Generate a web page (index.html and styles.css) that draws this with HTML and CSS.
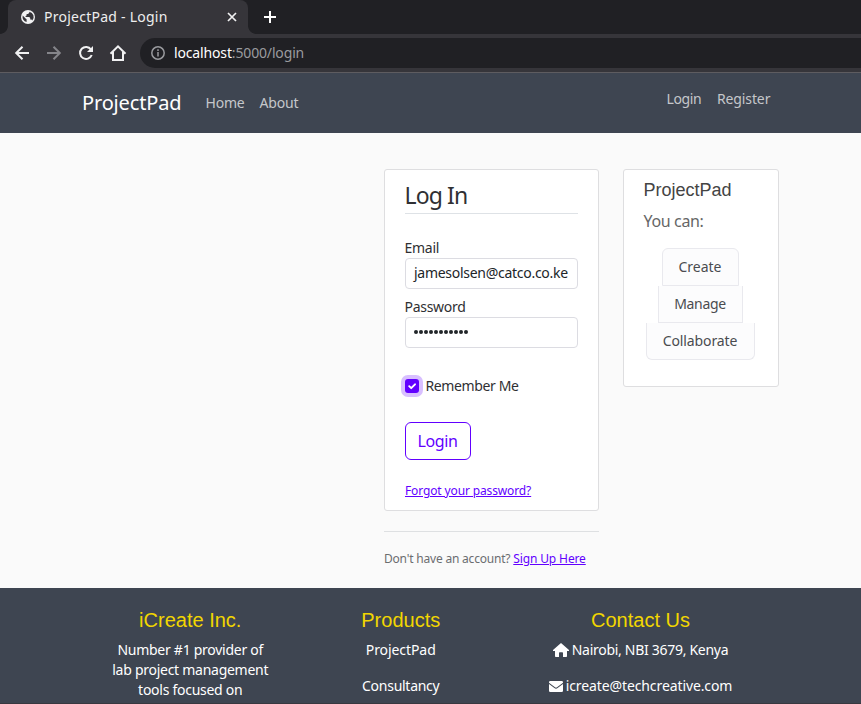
FILE: index.html
```html
<!DOCTYPE html>
<html lang="en">
<head>
<meta charset="utf-8">
<title>ProjectPad - Login</title>
<link rel="stylesheet" href="styles.css">
</head>
<body>
<header class="browser">
  <div class="tabs">
    <div class="tab">
      <svg class="globe" width="14" height="14" viewBox="0 0 14 14"><circle cx="7" cy="7" r="7" fill="#f1f1f2"/><path d="M1.700 5.600 4.600 8.400 5.600 9.200v2.900A5.400 5.400 0 0 1 1.700 5.600zM8.300 1.700v1.100L7 4H5.600v1.400l-1 .5v1.200h3.600l1 1v1.400h1.300l.8 1.100A5.400 5.400 0 0 0 8.300 1.700z" fill="#36353a"/></svg>
      <span class="tab-title">ProjectPad - Login</span>
      <svg class="close" width="10" height="10" viewBox="0 0 10 10"><path d="M1 1l8 8M9 1l-8 8" stroke="#f1f1f2" stroke-width="1.700"/></svg>
    </div>
    <svg class="plus" width="12" height="12" viewBox="0 0 12 12"><path d="M6 0v12M0 6h12" stroke="#fff" stroke-width="2"/></svg>
  </div>
  <div class="toolbar">
    <svg width="16" height="16" viewBox="0 0 16 16" fill="none" stroke="#f1f1f2" stroke-width="2"><path d="M15 8H2.500M8.500 1.700 2.200 8l6.300 6.300"/></svg>
    <svg width="16" height="16" viewBox="0 0 16 16" fill="none" stroke="#85858a" stroke-width="2"><path d="M1 8h12.500M7.500 1.700 13.800 8l-6.300 6.300"/></svg>
    <svg width="16" height="16" viewBox="0 0 16 16" fill="none" stroke="#f1f1f2" stroke-width="2"><path d="M13 4.500A6 6 0 1 0 13.700 10"/><path d="M15 1v6H9z" fill="#f1f1f2" stroke="none"/></svg>
    <svg class="house" width="18" height="18" viewBox="0 0 18 18" fill="none" stroke="#f1f1f2" stroke-width="2"><path d="M1.500 9.800 9 2.300l7.500 7.500M4 8v8h10V8"/></svg>
    <div class="omnibox">
      <svg width="14" height="14" viewBox="0 0 14 14" fill="none" stroke="#9a9b9f" stroke-width="1.500"><circle cx="7" cy="7" r="6.200"/><path d="M7 6v4.500M7 3.300v1.600"/></svg>
      <span class="url"><span class="host">localhost</span><span class="path">:5000/login</span></span>
    </div>
  </div>
</header>
<nav class="navbar">
  <a class="brand">ProjectPad</a>
  <a class="link home">Home</a>
  <a class="link about">About</a>
  <div class="account"><a class="link signin">Login</a><a class="link register">Register</a></div>
</nav>
<main class="content">
  <section class="main-col">
    <form class="card login-card">
      <h1>Log In</h1>
      <label class="lbl email-label">Email</label>
      <div class="input address">jamesolsen@catco.co.ke</div>
      <label class="lbl pass-label">Password</label>
      <div class="input dots"><i></i><i></i><i></i><i></i><i></i><i></i><i></i><i></i><i></i><i></i><i></i></div>
      <div class="remember"><span class="check"><svg width="14" height="14" viewBox="0 0 14 14"><path d="M4.200 7.200l2 2L10 5.300" fill="none" stroke="#fff" stroke-width="1.900" stroke-linecap="round" stroke-linejoin="round"/></svg></span><span>Remember Me</span></div>
      <div class="submit">Login</div>
      <a class="forgot">Forgot your password?</a>
    </form>
    <p class="signup">Don't have an account? <a>Sign Up Here</a></p>
  </section>
  <aside class="card side-card">
    <h2>ProjectPad</h2>
    <p class="lead">You can:</p>
    <ul class="actions">
      <li class="create">Create</li>
      <li class="manage">Manage</li>
      <li class="collab">Collaborate</li>
    </ul>
  </aside>
</main>
<footer class="footer">
  <section class="about-col"><h3>iCreate Inc.</h3><p>Number #1 provider of<br>lab project management<br>tools focused on</p></section>
  <section class="prod-col"><h3>Products</h3><p class="product">ProjectPad</p><p class="consult">Consultancy</p></section>
  <section class="contact-col"><h3>Contact Us</h3>
    <p class="place"><svg width="16" height="14" viewBox="0 0 16 14" fill="#fff"><path d="M8 0 0 7v1h2v5.200q0 .8.800.8H6V10q0-.7.700-.7h2.600q.7 0 .7.700v4h3.200q.8 0 .8-.8V8h2V7z"/></svg><span>Nairobi, NBI 3679, Kenya</span></p>
    <p class="mail"><svg width="14" height="11" viewBox="0 0 14 11" fill="#fff"><path d="M1.300 0h11.400Q14 0 14 1.300v.5L8 6.300q-1 .7-2 0L0 1.800v-.5Q0 0 1.300 0zM0 3l5.400 4.100q1.600 1.100 3.200 0L14 3v6.700q0 1.300-1.300 1.300H1.300Q0 11 0 9.700z"/></svg><span>icreate@techcreative.com</span></p>
  </section>
</footer>
</body>
</html>
```
FILE: styles.css
```css
*{box-sizing:border-box}
html,body{margin:0;width:861px;height:704px;overflow:hidden}
body{font:14px/20px "Noto Sans",sans-serif;background:#fafafa;color:#2f3033}
h1,h2,h3,p,ul{margin:0;padding:0;font-weight:400}
.browser{height:73px;background:#36353a;border-bottom:1px solid #5e5c60}
.tabs{height:34px;background:#202024;display:flex;align-items:center;padding-left:8px}
.tab{position:relative;width:240px;height:34px;background:#36353a;border-radius:8px 8px 0 0;display:flex;align-items:center;padding:0 11px 0 13px}
.tab::before,.tab::after{content:"";position:absolute;bottom:0;width:8px;height:8px}
.tab::before{left:-8px;background:radial-gradient(circle at 0 0,#202024 7.500px,#36353a 8.200px)}
.tab::after{right:-8px;background:radial-gradient(circle at 100% 0,#202024 7.500px,#36353a 8.200px)}
.tab-title{flex:1;margin-left:9px;color:#eee;letter-spacing:.25px}
.plus{margin-left:16px}
.toolbar{height:38px;display:flex;align-items:center;gap:16px;padding-left:14px}
.house{margin-left:-1px}
.omnibox{height:30px;background:#202024;border-radius:15px 0 0 15px;flex:1;margin-left:-3px;display:flex;align-items:center;padding-left:11px;gap:9px}
.url{color:#9a9b9f;letter-spacing:-.15px}
.host{color:#fff;letter-spacing:-.15px}
.navbar{height:60px;background:#3e4551;display:flex;padding:0 90px 0 82px;line-height:60px}
.brand{color:#fff;font-size:20px;width:123.500px;letter-spacing:-.15px}
.link{color:#c5c7cb;letter-spacing:-.2px}
.home{width:54px}
.account{margin-left:auto;line-height:52px;display:flex;gap:15px}
.signin{width:35.500px;letter-spacing:-.38px}
.register{width:54px;letter-spacing:-.12px}
.content{height:455px;display:flex;align-items:flex-start;padding:36px 0 0 384px;gap:24px}
.main-col{width:215px}
.card{background:#fff;border:1px solid #dedee0;border-radius:3px;padding:0 20px}
.login-card{height:342px;display:block}
h1{font-size:23px;line-height:42px;height:44px;border-bottom:1px solid #dee2e6;padding-top:4px;letter-spacing:-.9px;text-indent:-.5px}
.lbl{display:block;height:20px;letter-spacing:-.28px;text-indent:-.5px}
.email-label{margin-top:24px}
.pass-label{margin-top:8px}
.input{height:31px;border:1px solid #dcdce2;border-radius:4px;padding:0 8px;line-height:28px}
.address{letter-spacing:-.28px;color:#212529}
.dots{display:flex;align-items:center;gap:1px}
.dots i{width:4px;height:4px;border-radius:50%;background:#212529;margin-top:-1px}
.remember{display:flex;margin-top:28px;height:20px;align-items:center;letter-spacing:-.38px}
.check{width:14px;height:14px;background:#6200ff;border-radius:3px;box-shadow:0 0 0 4px #d8bfff;margin-right:6.500px;display:flex}
.submit{margin-top:26px;width:66px;height:38px;border:1px solid #6200ff;border-radius:6px;color:#6200ff;font-size:16px;line-height:36px;padding-left:11.500px;letter-spacing:-.4px}
.forgot{display:block;margin-top:21px;font-size:12px;color:#6200ff;text-decoration:underline;letter-spacing:-.13px}
.signup{margin-top:20px;border-top:1px solid #dee0e2;padding-top:17px;font-size:12px;color:#6b6d70;letter-spacing:-.2px}
.signup a{color:#6200ff;text-decoration:underline;letter-spacing:-.13px}
.side-card{width:156px;height:218px}
h2{font:18px/22px "Liberation Sans",sans-serif;color:#444;margin-top:9px;text-indent:-.5px}
.lead{font-size:16px;line-height:24px;margin-top:8px;color:#666;letter-spacing:-.35px;text-indent:-.5px}
.actions{list-style:none;display:flex;flex-direction:column;align-items:center;margin:15px -1px 0 -3px}
.actions li{height:37px;background:#fcfcfd;border:1px solid #e9e9ee;border-top:0;text-align:center;line-height:36px;color:#4a4c50}
.actions .create{width:77px;height:38px;border-top:1px solid #e9e9ee;border-radius:6px 6px 0 0}
.manage{width:85px;letter-spacing:-.33px}
.actions .collab{width:109px;border-radius:0 0 6px 6px;letter-spacing:-.13px}
.footer{height:116px;background:#3e4551;border-bottom:1px solid #38383f;color:#fff;text-align:center;display:flex;overflow:hidden;padding-left:85px}
h3{font:20px/24px "Liberation Sans",sans-serif;color:#f2d600;margin:20px 0 8px}
.footer p{margin-bottom:16px;letter-spacing:-.27px}
.about-col,.prod-col{width:210.500px}
.contact-col{width:269px}
.footer .product{letter-spacing:-.08px}
.footer .place,.footer .mail{display:flex;align-items:center;justify-content:center;gap:3px;letter-spacing:-.29px}
.footer .mail{letter-spacing:-.1px}
```
